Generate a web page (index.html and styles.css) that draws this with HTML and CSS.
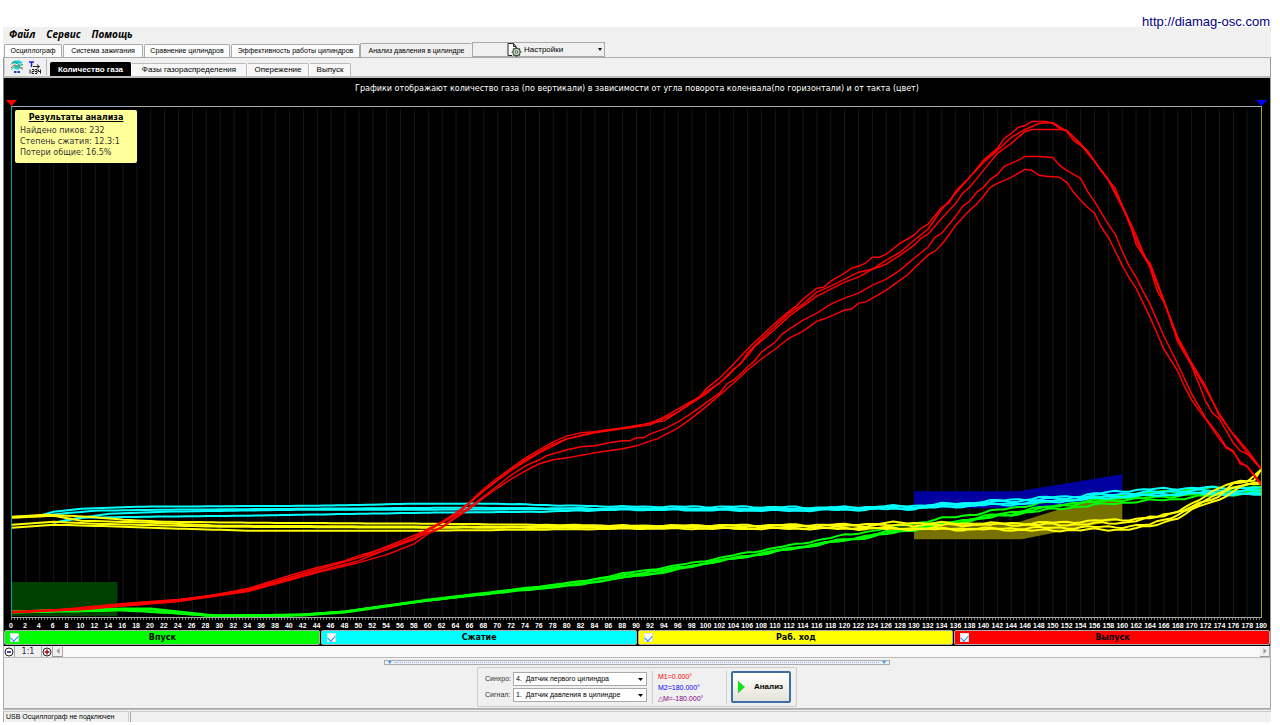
FILE: index.html
```html
<!DOCTYPE html>
<html lang="ru">
<head>
<meta charset="utf-8">
<title>Diamag — Анализ давления в цилиндре</title>
<link rel="stylesheet" href="styles.css">
</head>
<body>
<header class="site"><a href="http://diamag-osc.com">http://diamag-osc.com</a></header>
<div class="window">
  <nav class="menu">
    <button type="button">Файл</button>
    <button type="button">Сервис</button>
    <button type="button">Помощь</button>
  </nav>

  <div class="tabs">
    <button type="button" class="tab tab-a">Осциллограф</button>
    <button type="button" class="tab tab-b">Система зажигания</button>
    <button type="button" class="tab tab-c">Сравнение цилиндров</button>
    <button type="button" class="tab tab-d">Эффективность работы цилиндров</button>
    <button type="button" class="tab tab-e current">Анализ давления в цилиндре</button>
    <button type="button" class="settings">
      <svg width="15" height="14" viewBox="0 0 15 14" aria-hidden="true">
        <path d="M5 12.500H1V.5h5.500L9 3.500V5M6.500.5V3.500H9" fill="#fff" stroke="#222"/>
        <circle cx="9.500" cy="9" r="3.600" fill="#dfe8df" stroke="#3c4c3c" stroke-width="1.200"/>
        <circle cx="9.500" cy="9" r="1.400" fill="none" stroke="#3c5c3c"/>
        <path d="M9.500 4v1.500M9.500 12.500V14M4.500 9H6M13 9h1.500M6 5.500l1 1M12 11.500l1 1M13 5.500l-1 1M7 11.500l-1 1" stroke="#3c4c3c" stroke-width="1.200"/>
      </svg>
      <span>Настройки</span>
      <i class="caret"></i>
    </button>
  </div>

  <div class="subbar">
    <div class="tools">
      <button type="button" aria-label="Графики">
        <svg width="14" height="14" viewBox="0 0 14 14">
          <path d="M2 2.500h10M4 1.500h6" stroke="#12cde0" stroke-width="2"/>
          <path d="M3 5h8L9 9.500H5z" fill="#12dcec"/>
          <path d="M1 4.500q3-4 6-1t6 1" fill="none" stroke="#189a58"/>
          <path d="M1 8q3-5 6-2t6 2" fill="none" stroke="#e65050"/>
          <path d="M1 9.500q3-3 6-3t6 3" fill="none" stroke="#30b060"/>
          <path d="M4 12h2.500M7.500 12H10" stroke="#1040d0" stroke-width="2"/>
        </svg>
      </button>
      <button type="button" aria-label="Метки тактов">
        <svg width="12" height="13" viewBox="0 0 12 13">
          <path d="M0 1h5M2.500 1v5" stroke="#2020e0" stroke-width="1.500"/>
          <path d="M4 5.500h6M8 3.500l2.500 2L8 7.500" fill="none" stroke="#222"/>
          <path d="M1 8.500v4M3 8.500h2v2H3v2h2M6 8.500h2v4H6M6 10.500h2M9.500 8.500v2h2M11.500 8.500v4" fill="none" stroke="#222"/>
        </svg>
      </button>
    </div>
    <div class="subtabs">
      <button type="button" class="subtab sub-a current">Количество газа</button>
      <button type="button" class="subtab sub-b">Фазы газораспределения</button>
      <button type="button" class="subtab sub-c">Опережение</button>
      <button type="button" class="subtab sub-d">Выпуск</button>
    </div>
  </div>

  <main class="chart">
    <h1>Графики отображают количество газа (по вертикали) в зависимости от угла поворота коленвала(по горизонтали) и от такта (цвет)</h1>
    <div class="frame">
      <svg class="plot" id="plot" viewBox="0 106 180 511" preserveAspectRatio="none" role="img" aria-label="Количество газа"></svg>
      <i class="marker marker-red"></i>
      <i class="marker marker-blue"></i>
      <section class="results">
        <h2>Результаты анализа</h2>
        <p>Найдено пиков: 232</p>
        <p>Степень сжатия: 12.3:1</p>
        <p>Потери общие: 16.5%</p>
      </section>
    </div>
    <div class="axis" id="axis"></div>
    <div class="legend">
      <label class="green"><input type="checkbox" checked><span>Впуск</span></label>
      <label class="cyan"><input type="checkbox" checked><span>Сжатие</span></label>
      <label class="yellow"><input type="checkbox" checked><span>Раб. ход</span></label>
      <label class="red"><input type="checkbox" checked><span>Выпуск</span></label>
    </div>
  </main>

  <div class="scroll">
    <button type="button" aria-label="Уменьшить"><svg width="10" height="10" viewBox="0 0 10 10"><circle cx="5" cy="5" r="4" fill="#fff" stroke="#222"/><path d="M3 5h4" stroke="#101080" stroke-width="1.500"/></svg></button>
    <button type="button" class="scale">1:1</button>
    <button type="button" aria-label="Увеличить"><svg width="10" height="10" viewBox="0 0 10 10"><circle cx="5" cy="5" r="4" fill="#fff" stroke="#222"/><path d="M2.500 5h5M5 2.500v5" stroke="#a01010" stroke-width="1.500"/></svg></button>
    <button type="button" class="arrow" aria-label="Влево"><svg width="4" height="6" viewBox="0 0 4 6"><path d="M3.500 0v6L.5 3z" fill="#999"/></svg></button>
    <div class="track"></div>
    <button type="button" class="arrow" aria-label="Вправо"><svg width="4" height="6" viewBox="0 0 4 6"><path d="M.5 0v6l3-3z" fill="#999"/></svg></button>
  </div>

  <div class="panel">
    <div class="splitter"><i></i><b></b><i></i></div>
    <form class="controls">
      <div class="fields">
        <label for="sync">Синхро:</label>
        <div class="pick"><select id="sync"><option>4.&nbsp; Датчик первого цилиндра</option></select></div>
        <label for="signal">Сигнал:</label>
        <div class="pick"><select id="signal"><option>1.&nbsp; Датчик давления в цилиндре</option></select></div>
      </div>
      <div class="readings">
        <span class="m1">M1=0.000°</span>
        <span class="m2">M2=180.000°</span>
        <span class="dm">△M=-180.000°</span>
      </div>
      <button type="button" class="run">
        <svg width="7" height="12" viewBox="0 0 7 12" aria-hidden="true"><path d="M0 0v12l6.500-6z" fill="#0e0" stroke="#4a9a4a" stroke-width=".5"/></svg>
        <span>Анализ</span>
      </button>
    </form>
  </div>
  <footer class="status"><span>USB Осциллограф не подключен</span><span></span></footer>
</div>
<script src="chart.js"></script>
</body>
</html>
```

FILE: styles.css
```css
* { box-sizing: border-box; }

body {
  margin: 0;
  min-height: 100vh;
  display: flex;
  flex-direction: column;
  background: #fff;
  color: #000;
  font: 8px/10px "Liberation Sans", Arial, sans-serif;
}

button {
  margin: 0;
  padding: 0;
  border: 0;
  background: none;
  color: inherit;
  font: inherit;
}

svg { display: block; flex: none; }

.site {
  position: relative;
  z-index: 1;
  height: 27px;
  padding: 14px 10px 0 0;
  text-align: right;
  font-size: 13px;
  line-height: 15px;
}
.site a { color: #000080; text-decoration: none; }

.window {
  flex: 1;
  display: flex;
  flex-direction: column;
  margin: 0 9px 3px 3px;
  background: #f0f0f0;
}

.menu {
  display: flex;
  gap: 11px;
  height: 15px;
  padding: 0 6px;
  font: italic bold 10px/15px "Open Sans", "Noto Sans", sans-serif;
}

.tabs {
  display: flex;
  align-items: flex-end;
  height: 16px;
  border-bottom: 1px solid #aaa;
}
.tab {
  height: 13px;
  margin-left: 1px;
  border: 1px solid #aaa;
  border-bottom: 0;
  border-radius: 2px 2px 0 0;
  background: #fcfcfc;
  font-size: 7px;
  white-space: nowrap;
}
.tab-a { width: 58px; }
.tab-b { width: 80px; }
.tab-c { width: 86px; }
.tab-d { width: 129px; }
.tab-e { width: 112px; margin-left: 0; }
.tab.current { height: 14px; background: #f0f0f0; border-right: 0; }
.settings {
  display: flex;
  align-items: center;
  gap: 2px;
  width: 133px;
  height: 15px;
  padding: 0 2px 0 34px;
  border: 1px solid #aaa;
}
.caret {
  width: 4px;
  height: 3px;
  margin-left: auto;
  background: #000;
  clip-path: polygon(0 0, 100% 0, 50% 100%);
}

.subbar {
  display: flex;
  align-items: flex-end;
  height: 20px;
  border-right: 1px solid #999;
  border-left: 1px solid #999;
  border-bottom: 2px solid #bbb;
}
.tools {
  display: flex;
  align-items: center;
  gap: 5px;
  width: 43px;
  height: 16px;
  padding-left: 5px;
  margin: 0 3px 1px 0;
  border-left: 1px solid #ccc;
  border-right: 1px solid #bbb;
}
.subtabs { display: flex; align-items: flex-end; }
.subtab {
  height: 13px;
  border: 1px solid #bbb;
  border-left-color: #fff;
  border-bottom: 0;
  border-radius: 2px 2px 0 0;
  background: #f7f7f7;
}
.sub-a { width: 81px; }
.sub-b { width: 116px; }
.sub-c { width: 62px; }
.sub-d { width: 42px; }
.subtab.current {
  height: 14px;
  border-color: #000;
  background: #000;
  color: #fff;
  font-weight: bold;
}

.chart {
  flex: 1;
  display: flex;
  flex-direction: column;
  border-left: 1px solid #777;
  border-right: 1px solid #999;
  background: #000;
}
.chart h1 {
  margin: 0;
  padding: 5px 0 12px;
  color: #fff;
  font: 8px/11px "DejaVu Sans", Verdana, sans-serif;
  text-align: center;
}
.frame {
  position: relative;
  flex: 1;
  min-height: 300px;
  margin: 0 8px 0 7px;
}
.plot {
  position: absolute;
  inset: 0;
  width: 100%;
  height: 100%;
  border-top: 1px solid #aaa;
  border-left: 1px solid #00a0a0;
  border-right: 1px solid #a8a810;
}
.plot * { vector-effect: non-scaling-stroke; }
.plot polyline { fill: none; stroke-width: 2px; }
.plot .grid { stroke: #171717; stroke-width: 1px; }
.plot .s-red { stroke: #f00; stroke-width: 1.500px; }
.s-green { stroke: #0f0; }
.s-cyan { stroke: #0ff; }
.s-yellow { stroke: #ff0; }
.z-green { fill: #004000; }
.z-blue { fill: #0000a0; }
.z-olive { fill: #777200; }

.marker {
  position: absolute;
  top: -6px;
  width: 11px;
  height: 6px;
  clip-path: polygon(0 0, 100% 0, 50% 100%);
}
.marker-red { left: -5px; background: #f00; }
.marker-blue { right: -5px; background: #00f; }

.results {
  position: absolute;
  top: 4px;
  left: 4px;
  width: 122px;
  padding: 2px 5px 5px;
  border-radius: 2px;
  background: #ff9;
  color: #333;
  font: 8px/11px "DejaVu Sans", Verdana, sans-serif;
}
.results h2 {
  margin: 0 0 2px;
  color: #000;
  font-size: 8px;
  line-height: 11px;
  text-align: center;
  text-decoration: underline;
}
.results p { margin: 0; }

.axis {
  display: flex;
  justify-content: space-between;
  height: 13px;
  margin: 0 8px 0 7px;
  border-top: 1px solid #aaa;
  background: repeating-linear-gradient(90deg, #777 0 1px, transparent 1px 3px) top / 100% 2px no-repeat;
  color: #fff;
  font-size: 7px;
  font-weight: bold;
  line-height: 15px;
}
.axis span { display: flex; justify-content: center; width: 0; }

.legend { display: grid; grid-template-columns: repeat(4, 1fr); gap: 1px; padding-bottom: 1px; }
.legend label {
  display: flex;
  align-items: center;
  height: 15px;
  padding: 0 13px 0 5px;
  border: 1px solid #aaa;
  border-radius: 2px;
  font: bold 8px/10px "DejaVu Sans", Verdana, sans-serif;
}
.legend span { flex: 1; text-align: center; }
.legend input {
  appearance: none;
  width: 9px;
  height: 9px;
  margin: 0;
  border: 1px solid #ddd;
  background: #fff;
}
.legend input:checked::before {
  content: "";
  display: block;
  width: 6px;
  height: 4px;
  margin-top: 1px;
  border-left: 1px solid #28f;
  border-bottom: 1px solid #28f;
  transform: rotate(-45deg);
}
.green { background: #0f0; }
.cyan { background: #0ff; }
.yellow { background: #ff0; }
.red { background: #f00; }

.scroll {
  display: flex;
  height: 12px;
  border: 1px solid #bbb;
  border-top: 0;
  background: #f0f0f0;
}
.scroll button {
  display: flex;
  align-items: center;
  justify-content: center;
  width: 11px;
  border-right: 1px solid #aaa;
}
.scroll .scale {
  width: 27px;
  color: #302050;
  font: 8px/10px "DejaVu Sans", Verdana, sans-serif;
}
.scroll .arrow { width: 10px; border-bottom: 1px solid #999; }
.track { flex: 1; background: #f9f9f9; }

.panel {
  display: flex;
  flex-direction: column;
  align-items: center;
  gap: 2px;
  padding: 2px 0 1px;
  border: 1px solid #aaa;
  border-top: 0;
}
.splitter {
  display: flex;
  align-items: center;
  justify-content: space-between;
  gap: 3px;
  width: 40%;
  height: 5px;
  padding: 0 3px;
  border: 1px solid #aaa;
}
.splitter i { width: 4px; height: 3px; background: #39f; clip-path: polygon(0 0, 100% 0, 50% 100%); }
.splitter b { flex: 1; border-top: 1px dotted #8bf; }

.controls {
  display: flex;
  align-items: center;
  height: 40px;
  padding: 0 5px 0 7px;
  border: 1px solid #ccc;
  border-radius: 2px;
}
.fields {
  display: grid;
  grid-template-columns: 28px 134px;
  gap: 2px 0;
  align-items: center;
  color: #333;
}
.fields label { white-space: nowrap; font-size: 7px; }
.pick { position: relative; display: flex; }
.pick select {
  appearance: none;
  width: 100%;
  height: 14px;
  margin: 0;
  padding: 0 0 0 2px;
  border: 1px solid #aaa;
  border-radius: 0;
  background: #fff;
  color: #000;
  font: 7px/12px "Liberation Sans", Arial, sans-serif;
}
.pick::after {
  content: "";
  position: absolute;
  top: 6px;
  right: 4px;
  width: 5px;
  height: 3px;
  background: #000;
  clip-path: polygon(0 0, 100% 0, 50% 100%);
}
.readings {
  display: flex;
  flex-direction: column;
  width: 75px;
  margin: 0 4px 0 5px;
  padding-left: 5px;
  border-left: 1px solid #ccc;
  border-right: 1px solid #ccc;
  line-height: 11px;
  font-size: 7px;
}
.m1 { color: #f00; }
.m2 { color: #00f; }
.dm { color: #800080; }
.run {
  display: flex;
  align-items: center;
  gap: 9px;
  width: 60px;
  height: 32px;
  padding-left: 5px;
  border: 2px solid #3a6ea5;
  border-radius: 2px;
  background: linear-gradient(#fff, #e4e3d8);
  font-weight: bold;
}

.status { display: flex; height: 13px; padding-top: 1px; border-top: 1px solid #bbb; }
.status span { padding: 0 2px; border-left: 1px solid #aaa; border-top: 1px solid #ccc; line-height: 10px; flex: 1; font-size: 7px; }
.status span:first-child { flex: none; width: 126px; margin-right: 1px; border-right: 1px solid #ccc; }
```

FILE: chart.js
```js
const svg = document.getElementById("plot");
const axis = document.getElementById("axis");

function add(tag, attrs) {
  const el = document.createElementNS("http://www.w3.org/2000/svg", tag);
  for (const key in attrs) el.setAttribute(key, attrs[key]);
  svg.appendChild(el);
}

for (let deg = 0; deg <= 180; deg += 2) {
  const label = document.createElement("span");
  label.textContent = deg;
  axis.appendChild(label);
  if (deg > 0 && deg < 180) add("line", { x1: deg, x2: deg, y1: 108, y2: 617, class: "grid" });
}

add("polygon", { points: "0,582 15.2,582 15.2,616 0,616", class: "z-green" });
add("polygon", { points: "130,491 145,491 160,474 160,493 152,504 145,508 130,508", class: "z-blue" });
add("polygon", { points: "130,522 145,522 151,509 160,493 160,519 145.500,539 130,539", class: "z-olive" });

// Flat point lists: crank angle, level, crank angle, level...
const series = {
  "s-green": [
    [0,611,10,609,16,608,20,608,24,611,28,614,32,616,38,616,42,614,48,611,54,605,60,599,66,594,72,589,76,586,82,581,88,573,94,567,100,560,106,552,112,545,118,537,124,530,128,525,134,518,140,512,146,505,152,499,160,494,168,490,174,487,180,486],
    [0,611,10,609,16,609,20,609,24,612,28,615,32,616,38,616,42,614,48,611,54,605,60,600,66,595,72,590,76,588,82,583,88,577,94,572,100,563,106,556,112,549,118,542,124,536,130,529,134,524,140,518,146,512,152,507,160,502,168,498,174,494,180,493],
    [0,612,16,610,24,613,28,615,42,615,48,612,60,600,72,591,82,584,88,577,94,571,100,562,106,555,112,548,118,541,124,534,130,527,140,516,146,509,152,504,160,499,168,495,174,491,180,489],
    [0,611,16,609,28,615,42,614,48,611,60,600,72,590,88,575,100,563,112,548,124,535,130,528,140,517,146,511,152,503,160,497,168,494,180,491]
  ],
  "s-cyan": [
    [4,515,6,511,10,508,18,506,44,505,52,504,57,503,70,503,80,505,90,506,104,506,118,507,130,505,138,502,146,498,154,495,160,490,166,488,172,487,180,487],
    [4,515,7,513,12,510,22,509,44,508,64,507,88,508,112,508,130,506,140,502,148,499,160,493,168,490,180,490],
    [6,522,9,518,14,513,22,511,42,509,60,509,88,508,112,509,130,507,136,505,146,502,154,498,160,495,170,492,180,493],
    [6,522,10,517,20,516,34,515,42,514,60,512,76,511,88,509,112,510,130,508,138,505,146,503,156,498,160,496,170,493,180,494]
  ],
  "s-yellow": [
    [0,516,5,514,11,516,16,519,22,521,34,522,60,523,90,525,120,524,128,522,140,523,150,522,160,519,165,517,168,510,172,496,175,483,177,480,179,480,180,469],
    [0,517,6,515,10,520,20,522,30,525,60,526,90,526,120,525,140,524,152,524,160,522,166,515,170,506,174,496,176,481,178,482,180,469],
    [0,524,6,521,12,523,30,526,60,527,90,527,120,527,140,528,152,527,160,526,164,524,168,514,172,501,174,491,177,485,180,482],
    [0,527,6,524,16,526,24,528,34,530,60,530,90,528,120,528,144,529,148,530,156,529,160,529,164,526,168,517,172,503,174,499,176,490,178,484,180,483]
  ],
  "s-red": [
    [0,611,4,611,10,607,16,603,24,599,28,596,34,588,40,575,44,567,48,560,50,555,54,547,58,537,60,528,62,521,64,512,66,501,68,488,70,477,72,467,74,457,76,449,78,441,80,435,82,432,84,431,86,429,88,427,90,425,92,422,94,416,96,408,98,400,99,397,100,388,102,377,104,363,106,348,108,335,110,322,112,310,113,305,114,298,116,287,117,286,118,280,120,272,121,267,122,265,123,262,124,256,125,256,126,253,128,242,130,234,131,227,132,223,134,206,135,202,136,190,138,176,140,159,142,147,143,137,144,132,145,126,146,124,147,120,149,120,150,122,151,127,152,129,154,142,156,160,158,178,160,204,162,234,163,251,164,265,166,300,168,336,170,362,172,385,174,415,176,433,178,449,180,468],
    [0,612,10,608,24,600,34,589,44,569,48,561,54,549,58,539,60,530,64,514,66,502,68,490,70,479,74,459,78,443,80,438,84,432,88,428,92,424,96,411,100,391,102,382,104,368,105,363,106,352,108,338,110,325,112,312,114,303,116,291,118,285,120,278,122,271,124,268,126,259,128,251,130,239,132,228,134,208,136,192,138,176,140,161,142,149,144,136,146,128,148,122,150,121,152,130,153,139,155,149,157,170,159,187,161,222,163,254,164,262,165,280,166,299,168,341,170,364,172,388,174,413,176,434,178,452,180,468],
    [0,611,10,608,24,599,34,590,44,569,50,557,60,529,64,514,68,490,72,469,76,452,80,438,84,431,88,427,94,420,100,393,103,376,106,355,107,346,110,328,112,315,114,305,116,295,118,288,120,281,122,276,124,268,126,263,128,254,130,244,131,237,132,233,134,217,136,202,137,192,138,186,140,169,142,152,144,142,146,130,147,128,151,128,152,129,154,143,156,160,158,179,160,206,161,220,162,243,163,254,164,266,165,289,166,301,168,338,170,365,171,382,172,400,173,412,174,418,176,442,177,450,178,453,180,468],
    [0,612,10,609,24,600,34,590,44,571,50,560,60,532,62,526,66,506,70,485,72,474,74,465,75,462,76,459,77,455,78,453,80,449,82,446,84,445,86,442,88,440,89,440,90,437,91,437,92,433,94,428,96,421,98,412,100,402,102,392,103,383,104,379,105,373,106,366,107,360,108,351,110,341,111,333,112,328,114,319,116,312,118,303,120,297,122,292,124,284,126,278,128,269,130,257,132,246,133,236,134,232,136,215,137,205,138,200,139,191,140,186,141,178,142,173,143,165,145,159,146,155,148,155,150,156,151,164,152,169,154,177,155,190,156,200,158,223,159,233,160,250,161,265,162,276,163,290,164,303,166,335,168,363,170,393,172,417,174,435,175,446,176,450,177,463,178,465,180,483],
    [0,612,10,609,24,601,34,591,44,572,50,562,54,554,58,543,60,533,62,527,64,517,66,508,68,497,70,487,72,478,74,470,76,463,78,459,80,457,84,452,88,448,90,445,92,440,93,438,96,427,98,417,100,406,102,394,104,382,106,369,108,358,110,348,112,337,114,330,116,320,117,318,118,315,120,309,121,308,122,302,123,301,124,297,126,289,127,284,128,279,129,274,130,267,132,254,133,250,134,243,135,234,136,224,138,209,139,203,140,195,141,186,142,182,144,176,146,168,147,169,148,174,149,175,151,176,152,181,153,191,154,199,155,206,156,212,157,226,158,236,160,264,161,277,162,287,164,316,166,348,168,370,169,386,170,399,171,409,172,418,174,438,175,447,176,451,177,461,178,466,180,484]
  ]
};

function levelAt(points, deg) {
  let i = 2;
  while (i < points.length - 2 && points[i] < deg) i += 2;
  const t = (deg - points[i - 2]) / (points[i] - points[i - 2]);
  return points[i - 1] + (points[i + 1] - points[i - 1]) * t;
}

Object.keys(series).forEach((name) => {
  series[name].forEach((points, n) => {
    const path = [];
    for (let deg = points[0]; deg <= 180; deg++) {
      // Sensor ripple grows over the second half of the stroke.
      const size = name === "s-red" || deg < 60 || deg > 179 ? 0 : Math.min(1.5, (deg - 60) / 50);
      const ripple = Math.sin(deg * 1.3 + n * 2.1) * Math.cos(deg * 0.47 + n * 1.7) * size;
      path.push(deg + "," + (levelAt(points, deg) + ripple + 0.5).toFixed(1));
    }
    add("polyline", { points: path.join(" "), class: name });
  });
});
```
